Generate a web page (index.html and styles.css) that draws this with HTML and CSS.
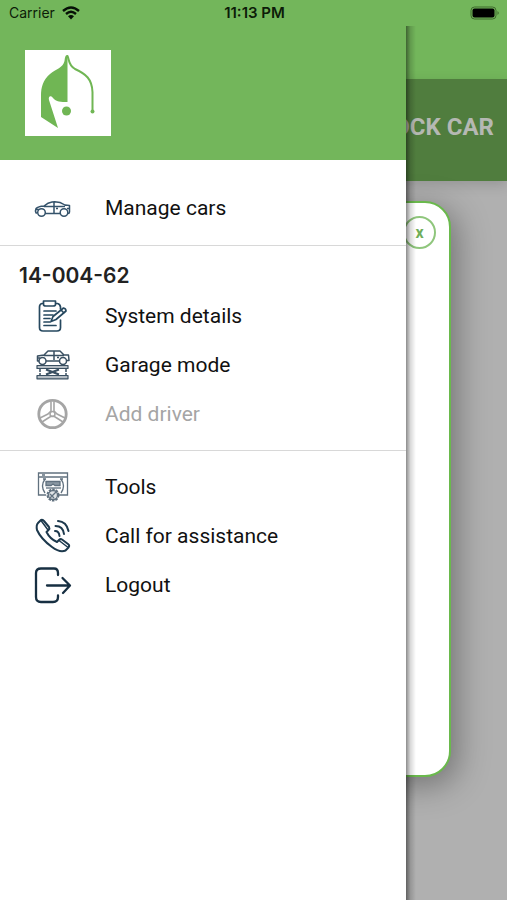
FILE: index.html
```html
<!DOCTYPE html>
<html lang="en">
<head>
<meta charset="utf-8">
<meta name="viewport" content="width=device-width, initial-scale=1">
<title>Menu</title>
<link rel="stylesheet" href="styles.css">
</head>
<body>
<div class="screen">
  <header class="status">
    <div class="carrier">
      <span>Carrier</span>
      <svg class="wifi" viewBox="0 0 18 14" aria-hidden="true">
        <path d="M1 5Q9-2 17 5M4 8Q9 3.600 14 8" fill="none" stroke="#061006" stroke-width="2.400"/>
        <path d="M6 10.200Q9 7.800 12 10.200L9 13.600Z" fill="#061006"/>
      </svg>
    </div>
    <span class="clock">11:13 PM</span>
    <svg class="battery" viewBox="0 0 30 14" aria-hidden="true">
      <rect x="1" y="1" width="25" height="12" rx="3.500" fill="none" stroke="#3e6a2c"/>
      <rect x="2.500" y="2.500" width="22" height="9" rx="2" fill="#000"/>
      <path d="M27.500 5Q30 7 27.500 9Z" fill="#3e6a2c"/>
    </svg>
  </header>

  <div class="stage">
    <main class="page">
      <div class="appbar"></div>
      <div class="banner">LOCK CAR</div>
      <section class="card">
        <button class="close" type="button" aria-label="Close">x</button>
      </section>
    </main>

    <aside class="drawer">
      <div class="brand">
        <svg class="logo" viewBox="0 0 86 86" aria-hidden="true">
          <path fill="#70b654" d="M42.500 5C40 5 40 8 39.500 11C38 18 31 19 25 24C18 30 16 37 16 46V67L33 78L24 50C23 46 26 45 28 48C31 52 36 52 42.500 52Z"/>
          <path fill="none" stroke="#70b654" stroke-width="2" stroke-linecap="round" d="M42.500 6C44.500 10 43 15 50 19C61 24 67 29 67.500 42V61"/>
          <circle cx="67.500" cy="61.500" r="2" fill="#70b654"/>
          <circle cx="41.500" cy="61" r="4.500" fill="#70b654"/>
        </svg>
      </div>

      <nav>
        <ul class="group group-cars">
          <li><a class="item" href="#">
            <svg class="icon" viewBox="0 0 40 40" aria-hidden="true">
              <g fill="none" stroke="#35536b" stroke-width="1.500" stroke-linejoin="round">
                <path d="M4 25H3Q2 22.500 3 20.500Q5 18.500 11 18Q15 14.500 19 14Q26 13 32 17L36.500 17.500V24Q36.500 25.500 35 25.500M12 25.500H27M11 18.500H32M21 14V25M3 21.500H6M34 20.500H37M23 20.500H25"/>
                <circle cx="8.500" cy="24.500" r="3.800"/><circle cx="31" cy="24.500" r="3.800"/>
              </g>
            </svg>
            <span>Manage cars</span></a></li>
        </ul>

        <h2 class="plate">14-004-62</h2>
        <ul class="group group-vehicle">
          <li><a class="item" href="#">
            <svg class="icon" viewBox="0 0 40 40" aria-hidden="true">
              <g fill="none" stroke="#26485f" stroke-width="1.700" stroke-linejoin="round" stroke-linecap="round">
                <path d="M10 7.500H9Q6.500 8 6.500 11V31.500Q6.500 35 10 35H24Q27.500 35 27.500 31.500V24M23 7.500H24.500Q27 8 27.500 11V13"/>
                <path d="M10.500 5H22.500V8.500Q22.500 10 20 10H13Q10.500 10 10.500 8.500ZM11 15H23M11 19H20M11 22.500H17M11 26H17M11 29.500H23"/>
                <path d="M18 25.500L20 20.500L30.500 12Q33 12.500 33 15L23 23.500ZM28 14L31 17"/>
              </g>
            </svg>
            <span>System details</span></a></li>
          <li><a class="item" href="#">
            <svg class="icon" viewBox="0 0 40 40" aria-hidden="true">
              <g fill="none" stroke="#3a5062" stroke-width="1.500" stroke-linejoin="round">
                <path d="M6 16H4.500V11L11 10L15 6H27L31 10H35.500L36 15.500H34M13 16H26M11 10.500H31M21 6V15M24 12.500H26M4 13H7"/>
                <circle cx="9.500" cy="16" r="3.500"/><circle cx="30" cy="16" r="3.500"/>
                <path fill="#b5bdc4" stroke-width="1.200" d="M4 20.500H35V23.500H4ZM4 30.500H35V33.800H4Z"/>
                <path d="M7 24V30M33 24V30"  stroke-dasharray="3 1"/>
                <path stroke-width="2" d="M13 24.500L26 29.500M26 24.500L13 29.500M16 27H23"/>
              </g>
            </svg>
            <span>Garage mode</span></a></li>
          <li><a class="item item-disabled" aria-disabled="true">
            <svg class="icon" viewBox="0 0 40 40" aria-hidden="true">
              <g fill="none" stroke="#a5a5a5" stroke-linejoin="round">
                <circle cx="19.500" cy="20" r="13.700" stroke-width="2.800"/>
                <path stroke-width="1.600" d="M18 7.500V17L15 20L7 24M21 7.500V17L24 20L32 24M9 28L16 23.500Q19.500 21 23 23.500L30 28"/>
                <circle cx="19.500" cy="20" r="2.500" stroke-width="1.500"/>
              </g>
            </svg>
            <span>Add driver</span></a></li>
        </ul>

        <ul class="group group-more">
          <li><a class="item" href="#">
            <svg class="icon" viewBox="0 0 40 40" aria-hidden="true">
              <g fill="none" stroke="#61717f" stroke-width="1.300">
                <path d="M13 28H5.500V6H34.500V28H26M6 10H34M9 8H12"/>
                <path d="M12 12Q7 19 12 26M28 12Q33 19 28 26M10 12H13M27 12H30"/>
                <path fill="#8b98a3" d="M13 14.500H27V18.500H22L20 17L18 18.500H13Z"/><path d="M13 21H28"/>
                <circle cx="20" cy="28" r="5.500" stroke-width="2" stroke-dasharray="2.500 1"/>
                <circle cx="20" cy="28" r="4.500" fill="#dfe3e6"/><path d="M17 31L23 25M17 27L21 31"/>
              </g>
            </svg>
            <span>Tools</span></a></li>
          <li><a class="item" href="#">
            <svg class="icon" viewBox="0 0 40 40" aria-hidden="true">
              <g fill="none" stroke="#1d394d" stroke-width="2" stroke-linejoin="round" stroke-linecap="round">
                <path d="M5 7L8 4Q10 3.500 11 5L16 11Q17 12.500 15.500 14L13.500 16Q17 23 24 26L26 24Q27.500 22.500 29 23.500L35 28Q37 29.500 35.500 31.500L32.500 34.500Q27 37 19 31Q8 23 4 14Q3 9 5 7Z"/>
                <path stroke-width="1.500" d="M8 4.500L15 14M34.500 31L26 24.500"/>
                <path d="M22 15Q26 15 26.500 20M22.500 10Q30 10 31 18M25 5Q33.500 5.500 35.500 15"/>
              </g>
            </svg>
            <span>Call for assistance</span></a></li>
          <li><a class="item" href="#">
            <svg class="icon" viewBox="0 0 40 40" aria-hidden="true">
              <path fill="none" stroke="#172f42" stroke-width="2.300" stroke-linejoin="round" stroke-linecap="round" d="M25 10V8Q25 3.500 21 3.500H8Q3 3.500 3 8V32Q3 37 8 37H20Q25 37 25 32V30.500M14 20.500H36.500M29.500 13L37 20.500L30 28"/>
            </svg>
            <span>Logout</span></a></li>
        </ul>
      </nav>
    </aside>
  </div>
</div>
</body>
</html>
```
FILE: styles.css
```css
* { box-sizing: border-box; }

body {
  margin: 0;
  font-family: Roboto, "Liberation Sans", sans-serif;
  color: #111;
}

.screen {
  display: flex;
  flex-direction: column;
  min-height: 100vh;
  background: #b0b0b0;
}

.status {
  display: grid;
  grid-template-columns: 1fr auto 1fr;
  align-items: center;
  height: 26px;
  padding: 0 7px 0 9px;
  background: #73b65b;
  color: #0d1c08;
  font: 14px/26px Inter, "Liberation Sans", sans-serif;
}

.carrier {
  display: flex;
  align-items: center;
  gap: 7px;
}

.wifi { width: 18px; height: 14px; }

.clock {
  font-size: 15px;
  font-weight: 600;
}

.battery {
  justify-self: end;
  width: 30px;
  height: 14px;
}

.stage {
  position: relative;
  flex: 1;
  display: flex;
  overflow: hidden;
}

.page {
  flex: 1;
  display: flex;
  flex-direction: column;
}

.appbar {
  height: 53px;
  background: #73b65b;
}

.banner {
  padding: 0 13px 6px;
  background: #507d3e;
  color: #b5b8b3;
  box-shadow: 0 4px 12px rgba(0, 0, 0, .15);
  font-size: 24px;
  font-weight: 700;
  line-height: 96px;
  text-align: right;
}

.card {
  flex: 1;
  margin: 20px 56px 123px;
  padding: 13px 13px;
  border: 2px solid #6ab94c;
  border-radius: 26px;
  background: #fff;
  box-shadow: 6px 8px 32px rgba(0, 0, 0, .35);
  text-align: right;
}

.close {
  width: 33px;
  height: 33px;
  padding: 0;
  border: 2px solid #8fc67c;
  border-radius: 50%;
  background: #fff;
  color: #6fae59;
  font: 700 16px/24px Roboto, sans-serif;
}

.drawer {
  position: absolute;
  inset: 0 20% 0 0;
  background: #fff;
}

.drawer::after {
  content: "";
  position: absolute;
  top: 0;
  bottom: 0;
  left: 100%;
  width: 10px;
  background: linear-gradient(to right, rgba(0, 0, 0, .45), rgba(0, 0, 0, .15) 45%, transparent);
}

.brand {
  padding: 24px 25px;
  background: #73b65b;
}

.logo {
  display: block;
  width: 86px;
  height: 86px;
  background: #fff;
}

.group {
  margin: 0;
  padding: 0;
  list-style: none;
}

.group-cars {
  padding: 23px 0 13px;
  border-bottom: 1px solid #d8d8d8;
}

.group-vehicle {
  padding-bottom: 12px;
  border-bottom: 1px solid #d8d8d8;
}

.group-more { padding-top: 11px; }

.plate {
  margin: 0;
  padding: 14px 19px 0;
  color: #222;
  font: 600 21px/31px Inter, "Liberation Sans", sans-serif;
}

.item {
  display: flex;
  align-items: center;
  gap: 32px;
  height: 49px;
  padding-left: 33px;
  color: #111;
  font-size: 21px;
  text-decoration: none;
}

.item-disabled { color: #a5a5a5; }

.icon {
  flex: none;
  width: 40px;
  height: 40px;
}
```
